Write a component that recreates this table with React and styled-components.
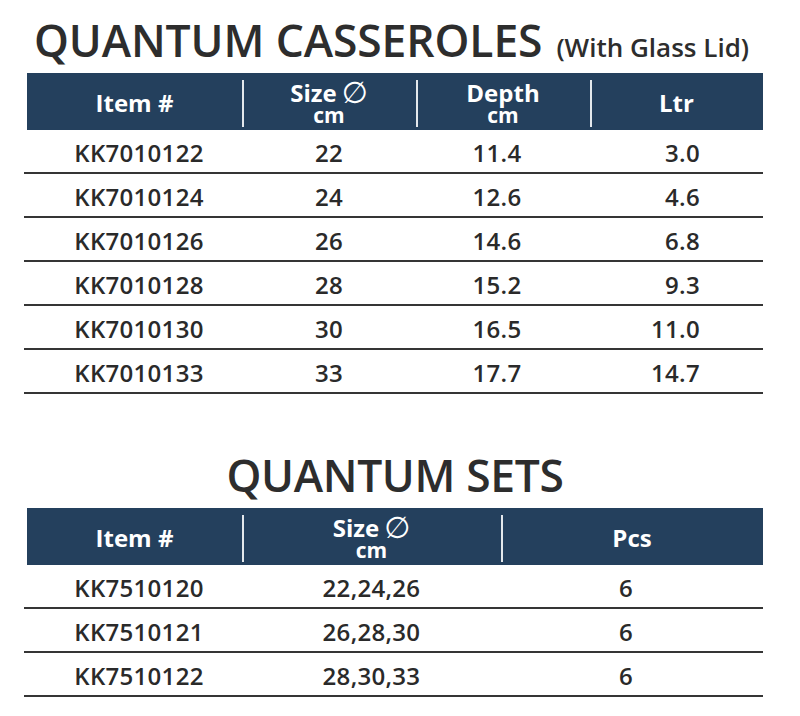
import React from 'react';
import styled, { createGlobalStyle } from 'styled-components';

const GlobalStyle = createGlobalStyle`
  body {
    margin: 0;
    background: #ffffff;
    font-family: 'Open Sans', 'Noto Sans', sans-serif;
  }
`;

const Page = styled.div`
  width: 800px;
  padding: 16px 37px 0 27px;
  box-sizing: border-box;
`;

const Section = styled.section`
  & + & {
    margin-top: 57px;
  }
`;

const Title = styled.h1`
  display: flex;
  align-items: baseline;
  justify-content: ${(p) => (p.$center ? 'center' : 'flex-start')};
  gap: 14px;
  height: 48px;
  margin: 0 0 9px;
  padding-left: ${(p) => (p.$center ? '0' : '7px')};
  font-size: 44.4px;
  line-height: 48px;
  font-weight: 600;
  color: #2d2d2d;
  letter-spacing: ${(p) => (p.$center ? '-0.35px' : '-0.1px')};
`;

const Note = styled.span`
  font-size: 26px;
  line-height: 1;
  font-weight: 600;
  letter-spacing: 0;
`;

const Grid = styled.div`
  display: grid;
  grid-template-columns: ${(p) => p.$cols};
`;

const Head = styled(Grid)`
  height: 57px;
  background: #24405d;
`;

const HeadCell = styled.div`
  position: relative;
  display: flex;
  flex-direction: column;
  align-items: center;
  justify-content: center;
  padding-top: ${(p) => (p.$twoLine ? '3px' : '2px')};
  color: #ffffff;
  font-size: 24px;
  font-weight: 700;
  line-height: 23px;

  &::before {
    content: ${(p) => (p.$divider ? "''" : 'none')};
    position: absolute;
    left: 0;
    top: 7px;
    bottom: 3px;
    width: 2px;
    background: #e4e8ec;
  }
`;

const Sub = styled.span`
  font-size: 21px;
  line-height: 22px;
`;

const Diam = styled.span`
  display: inline-block;
  margin-left: 5px;
  font-family: 'DejaVu Sans', sans-serif;
  font-weight: 400;
  font-size: 30px;
  line-height: 0;
  vertical-align: -1px;
`;

const Row = styled(Grid)`
  height: 44px;
  margin-left: -3px;
  border-bottom: 2px solid #353535;
  box-sizing: border-box;
`;

const Cell = styled.div`
  display: flex;
  align-items: center;
  justify-content: ${(p) => (p.$right ? 'flex-end' : 'center')};
  padding: 2px ${(p) => p.$pr || 0}px 0 ${(p) => p.$pl || 0}px;
  font-size: 24px;
  font-weight: 600;
  color: #2a2a2a;
  letter-spacing: 0.3px;
`;

const casseroleCols = [
  { label: 'Item #', pl: 12 },
  { label: 'Size', sub: 'cm', diam: true },
  { label: 'Depth', sub: 'cm', pr: 12 },
  { label: 'Ltr', right: true, pr: 63 },
];

const setCols = [
  { label: 'Item #', pl: 12 },
  { label: 'Size', sub: 'cm', diam: true },
  { label: 'Pcs', pr: 12 },
];

const casseroles = [
  ['KK7010122', '22', '11.4', '3.0'],
  ['KK7010124', '24', '12.6', '4.6'],
  ['KK7010126', '26', '14.6', '6.8'],
  ['KK7010128', '28', '15.2', '9.3'],
  ['KK7010130', '30', '16.5', '11.0'],
  ['KK7010133', '33', '17.7', '14.7'],
];

const sets = [
  ['KK7510120', '22,24,26', '6'],
  ['KK7510121', '26,28,30', '6'],
  ['KK7510122', '28,30,33', '6'],
];

// rows start 3px left of the blue header bar, so the first column is 3px wider
const widenFirst = (template) => template.replace(/^(\d+)px/, (m, n) => `${+n + 3}px`);

const Table = ({ cols, template, rows }) => (
  <div>
    <Head $cols={template}>
      {cols.map((c, i) => (
        <HeadCell key={c.label} $divider={i > 0} $twoLine={!!c.sub}>
          <span>
            {c.label}
            {c.diam && <Diam>∅</Diam>}
          </span>
          {c.sub && <Sub>{c.sub}</Sub>}
        </HeadCell>
      ))}
    </Head>
    {rows.map((r) => (
      <Row key={r[0]} $cols={widenFirst(template)}>
        {r.map((v, i) => (
          <Cell key={i} $pl={cols[i].pl} $pr={cols[i].pr} $right={cols[i].right}>
            {v}
          </Cell>
        ))}
      </Row>
    ))}
  </div>
);

export default function App() {
  return (
    <Page>
      <GlobalStyle />
      <Section>
        <Title>
          QUANTUM CASSEROLES <Note>(With Glass Lid)</Note>
        </Title>
        <Table cols={casseroleCols} template="215px 174px 174px 1fr" rows={casseroles} />
      </Section>
      <Section>
        <Title $center>QUANTUM SETS</Title>
        <Table cols={setCols} template="215px 259px 1fr" rows={sets} />
      </Section>
    </Page>
  );
}
